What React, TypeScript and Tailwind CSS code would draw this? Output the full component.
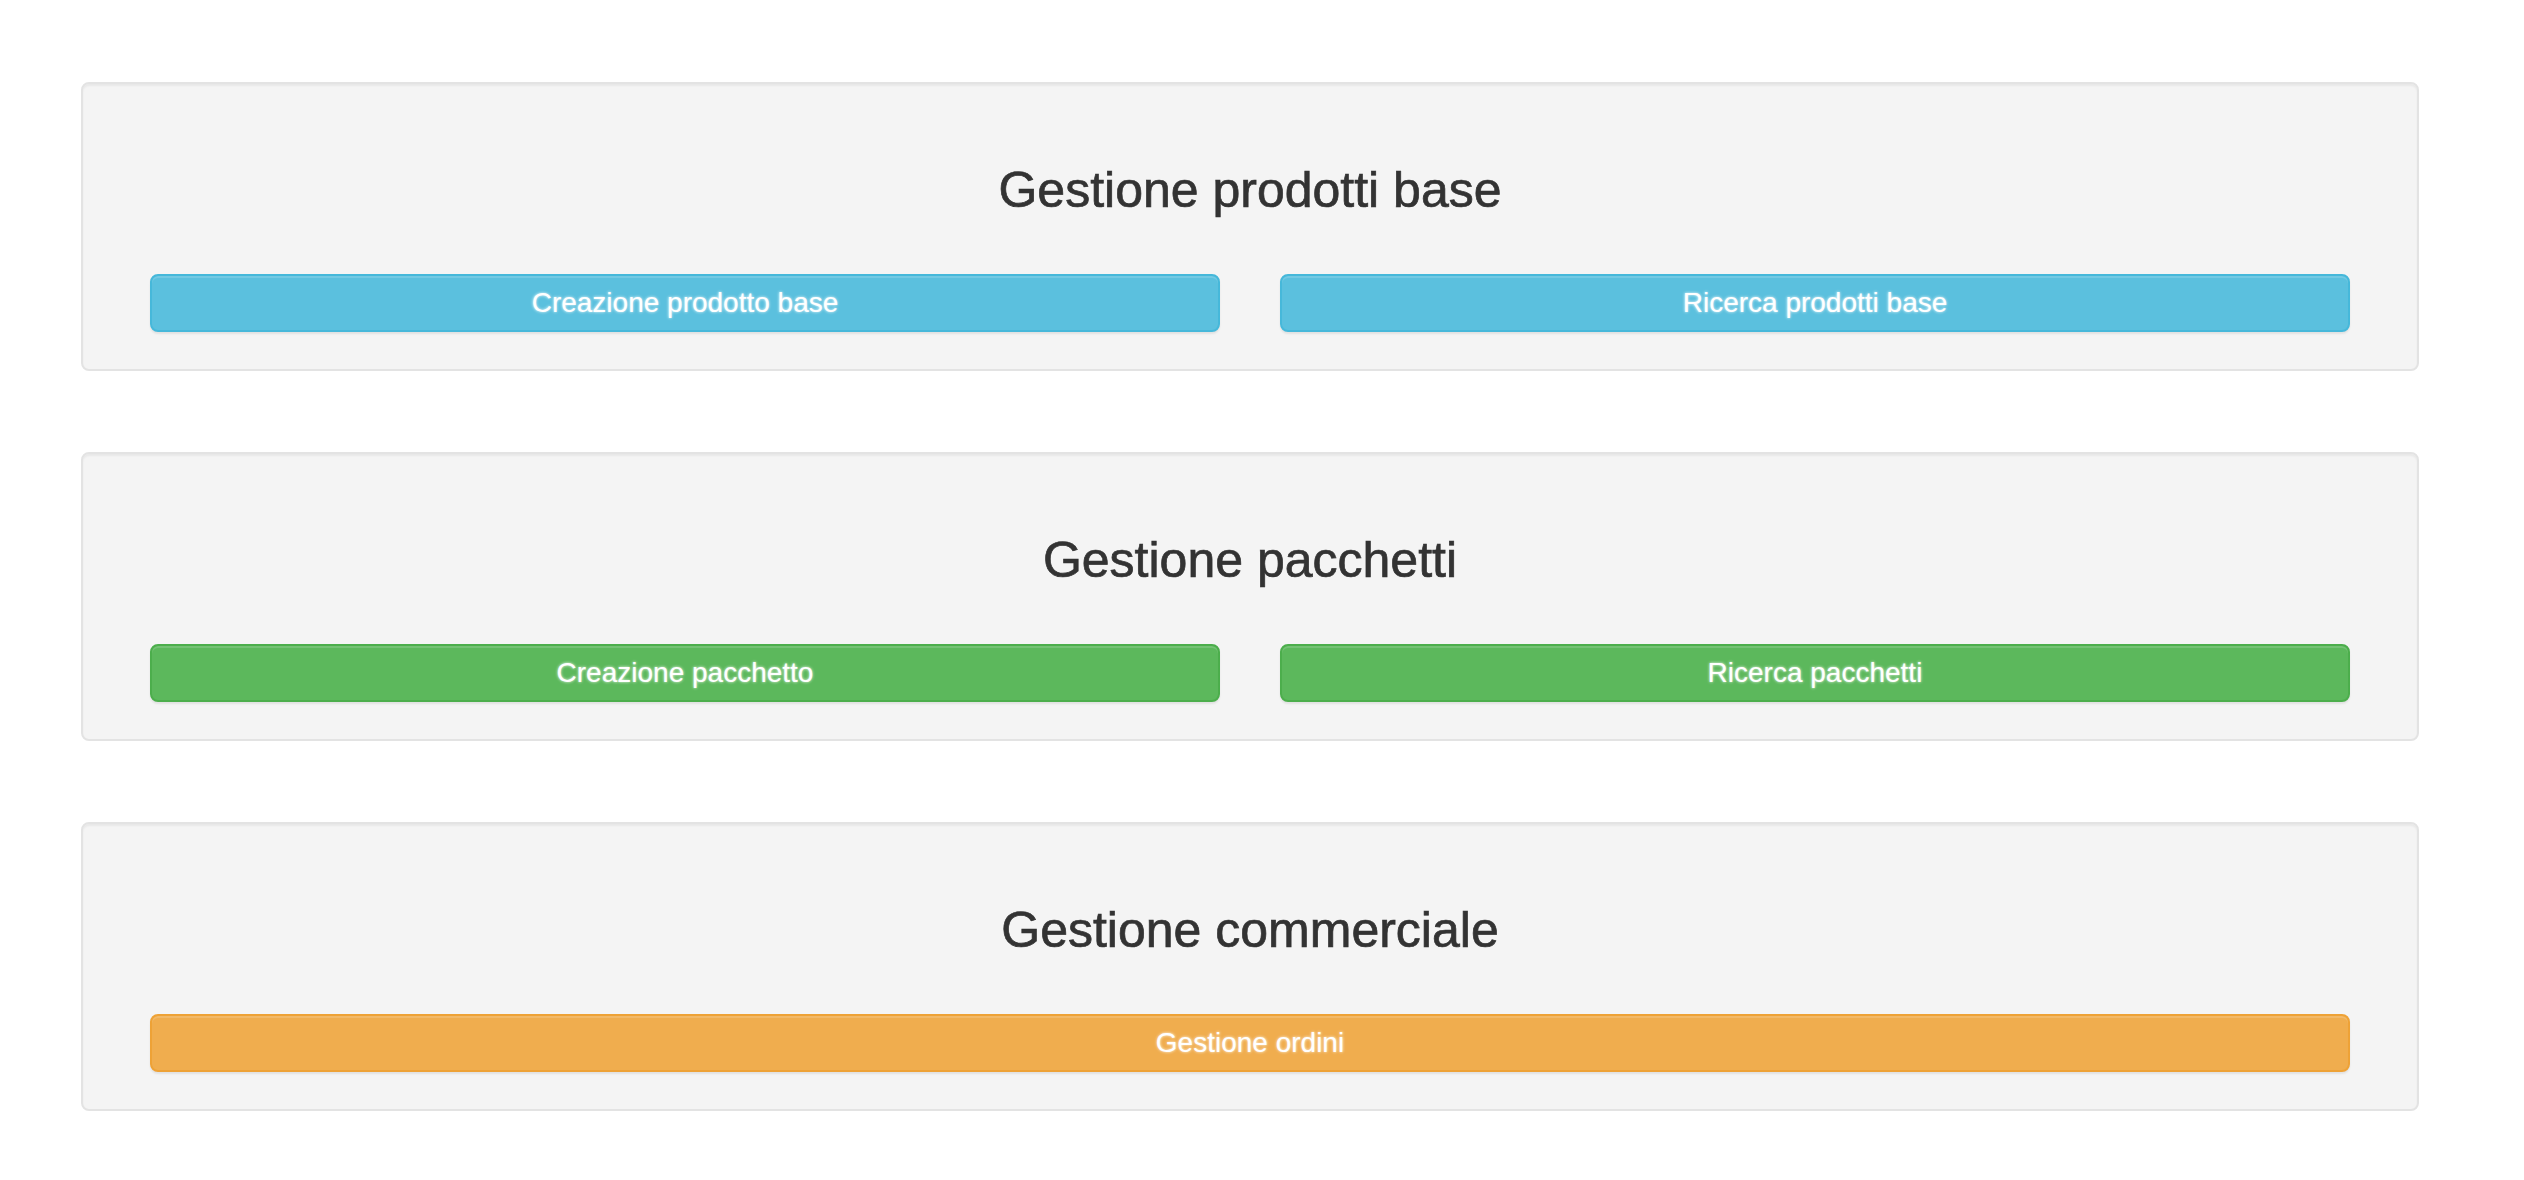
import React from "react";

type Btn = { label: string; tone: "info" | "success" | "warning" };

const toneClass: Record<Btn["tone"], string> = {
  info: "bg-[#5bc0de] border-[#46b8da]",
  success: "bg-[#5cb85c] border-[#4cae4c]",
  warning: "bg-[#f0ad4e] border-[#eea236]",
};

function Button({ label, tone }: Btn) {
  return (
    <button
      type="button"
      className={
        "box-border h-[58px] w-full rounded-[8px] border-2 pt-[7px] pb-[7px] text-center text-[28px] leading-[40px] text-white [text-shadow:0_0_3px_rgba(255,255,255,0.95)] shadow-[inset_0_2px_0_rgba(255,255,255,0.15),0_2px_2px_rgba(0,0,0,0.075)] " +
        toneClass[tone]
      }
    >
      {label}
    </button>
  );
}

function Panel({ title, buttons }: { title: string; buttons: Btn[] }) {
  return (
    <section className="box-border h-[289px] rounded-[8px] border-2 border-[#e3e3e3] bg-[#f4f4f4] px-[67px] pt-[81px] pb-[37px] shadow-[inset_0_2px_2px_rgba(0,0,0,0.05)]">
      <h3 className="m-0 text-center text-[50px] font-normal leading-[50px] text-[#333333] [-webkit-text-stroke:0.7px_#333333]">
        {title}
      </h3>
      <div
        className={
          buttons.length > 1
            ? "mt-[59px] grid grid-cols-2 gap-[60px]"
            : "mt-[59px] grid grid-cols-1"
        }
      >
        {buttons.map((b) => (
          <Button key={b.label} {...b} />
        ))}
      </div>
    </section>
  );
}

export default function App() {
  return (
    <div className="min-h-[1180px] bg-white font-['Liberation_Sans',Arial,Helvetica,sans-serif]">
      <div className="ml-[81px] flex w-[2338px] flex-col gap-[81px] pt-[82px]">
        <Panel
          title="Gestione prodotti base"
          buttons={[
            { label: "Creazione prodotto base", tone: "info" },
            { label: "Ricerca prodotti base", tone: "info" },
          ]}
        />
        <Panel
          title="Gestione pacchetti"
          buttons={[
            { label: "Creazione pacchetto", tone: "success" },
            { label: "Ricerca pacchetti", tone: "success" },
          ]}
        />
        <Panel
          title="Gestione commerciale"
          buttons={[{ label: "Gestione ordini", tone: "warning" }]}
        />
      </div>
    </div>
  );
}
